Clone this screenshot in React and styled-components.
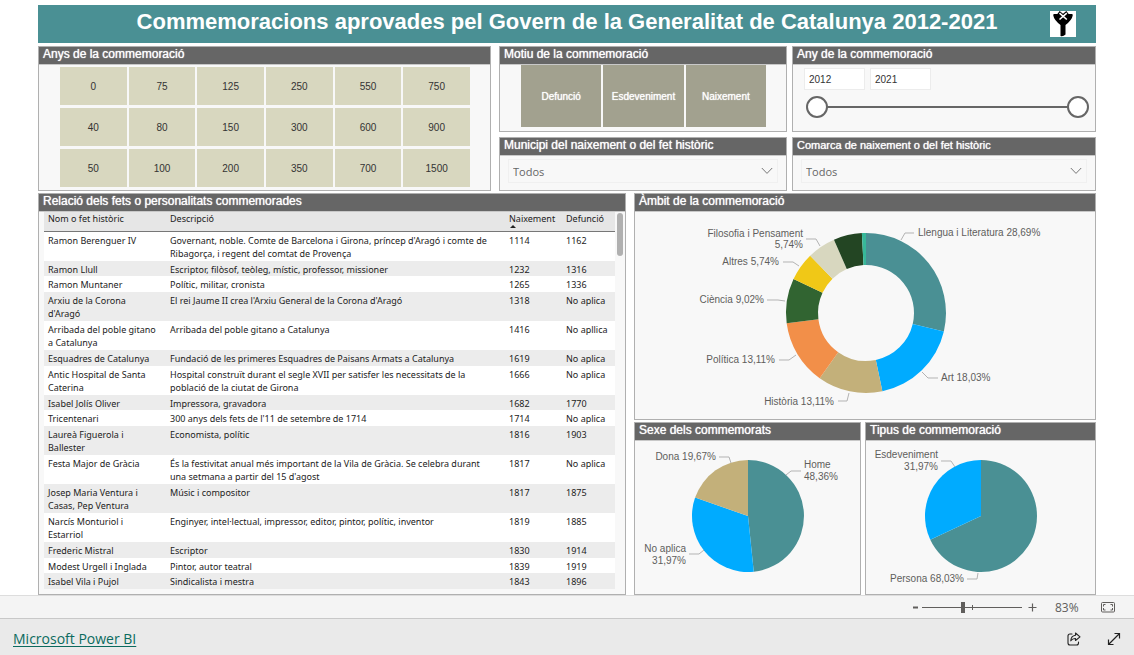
import React from "react";
import styled, { createGlobalStyle, css } from "styled-components";

const sans = `"Liberation Sans", Arial, sans-serif`;
const ui = `"Noto Sans", "Segoe UI", sans-serif`;
const uiLight = `"Open Sans", "Segoe UI", sans-serif`;

const GlobalStyle = createGlobalStyle`
  * { box-sizing: border-box; }
  body { margin: 0; background: #fff; font-family: ${sans}; color: #333; }
  button, input, select { font: inherit; color: inherit; margin: 0; }
`;

/* ---------- page ---------- */
const Report = styled.main`
  padding: 5px 38px 0;
  display: flex;
  flex-direction: column;
`;

const Banner = styled.header`
  display: grid;
  align-items: center;
  height: 38px;
  margin-bottom: 3px;
  background: #4a9094;
  color: #fff;
`;

const BannerTitle = styled.h1`
  grid-area: 1 / 1;
  margin: 0;
  padding-bottom: 5px;
  text-align: center;
  font-size: 22px;
  line-height: 26px;
  font-weight: 700;
`;

const ClearButton = styled.button`
  grid-area: 1 / 1;
  justify-self: end;
  width: 26px;
  height: 26px;
  margin-right: 20px;
  padding: 0;
  border: 0;
  background: #fff;
  svg { display: block; }
`;

const Split = styled.div`
  display: grid;
  grid-template-columns: ${(p) => p.$columns};
  column-gap: ${(p) => p.$gap}px;
`;

const Filters = styled(Split)`
  margin-bottom: 2px;
`;

const Stack = styled.div`
  display: flex;
  flex-direction: column;
  gap: ${(p) => p.$gap}px;
  min-width: 0;
`;

/* ---------- panel ---------- */
const PanelBox = styled.section`
  display: flex;
  flex-direction: column;
  min-width: 0;
  flex: ${(p) => (p.$grow ? 1 : "none")};
  border: 1px solid #b0b0b0;
  background: #f8f8f8;
`;

const PanelTitle = styled.h2`
  margin: 0;
  padding: 0 4px;
  height: 18px;
  border-bottom: 1px solid #c8c8c8;
  background: #666;
  color: #fff;
  font-size: ${(p) => (p.$small ? 11 : 12)}px;
  line-height: 14px;
  font-weight: 400;
  text-shadow: 0 0 1px #fff;
  white-space: nowrap;
`;

function Panel({ title, small, grow, children }) {
  return (
    <PanelBox $grow={grow}>
      <PanelTitle $small={small}>{title}</PanelTitle>
      {children}
    </PanelBox>
  );
}

/* ---------- tile slicers ---------- */
const YearTiles = styled.div`
  display: grid;
  grid-template-columns: repeat(6, 1fr);
  grid-auto-rows: 38px;
  gap: 3px 2px;
  padding: 2px 20px 3px 21px;
`;

const ReasonTiles = styled.div`
  display: grid;
  grid-template-columns: repeat(3, 1fr);
  grid-auto-rows: 62px;
  gap: 2px;
  padding: 0 20px 4px 21px;
`;

const Tile = styled.button`
  padding: 0;
  border: 0;
  font-size: 10px;
  background: #d8d7bf;
  color: #333;
  ${(p) =>
    p.$dark &&
    css`
      background: #a2a18f;
      color: #fff;
      text-shadow: 0 0 1px #fff;
    `}
`;

/* ---------- range slicer ---------- */
const RangeBody = styled.div`
  padding: 3px 6px 13px 11px;
`;

const YearFields = styled.div`
  display: flex;
  gap: 5px;
  margin-bottom: 6px;
`;

const YearField = styled.input`
  width: 61px;
  height: 22px;
  padding: 0 4px;
  border: 1px solid #ececec;
  background: #fff;
  font-size: 10px;
`;

const DualRange = styled.div`
  display: grid;
  align-items: center;
  margin: 0 0 0 2px;
  background: linear-gradient(#666, #666) center / calc(100% - 40px) 2px no-repeat;
`;

const RangeInput = styled.input`
  grid-area: 1 / 1;
  appearance: none;
  width: 100%;
  height: 22px;
  background: transparent;
  pointer-events: none;
  &::-webkit-slider-thumb {
    appearance: none;
    pointer-events: auto;
    width: 22px;
    height: 22px;
    border: 2px solid #666;
    border-radius: 50%;
    background: #fff;
  }
`;

/* ---------- drop-down slicer ---------- */
const SelectWrap = styled.div`
  display: grid;
  align-items: center;
  margin: 3px 8px 6px;
  svg { grid-area: 1 / 1; justify-self: end; margin-right: 5px; pointer-events: none; }
`;

const Select = styled.select`
  grid-area: 1 / 1;
  appearance: none;
  width: 100%;
  height: 24px;
  padding: 0 4px;
  border: 1px solid #f0f0f0;
  border-radius: 0;
  background: #f8f8f8;
  color: #666;
  font-family: ${uiLight};
  font-size: 11px;
`;

function Dropdown({ label }) {
  return (
    <SelectWrap>
      <Select aria-label={label}>
        <option>Todos</option>
      </Select>
      <svg width="12" height="8" viewBox="0 0 12 8" fill="none" stroke="#777">
        <path d="M.8 1 6 6.4 11.2 1" />
      </svg>
    </SelectWrap>
  );
}

/* ---------- table ---------- */
const TableBody = styled.div`
  display: flex;
  align-items: flex-start;
  padding-left: 5px;
`;

const DataTable = styled.table`
  flex: 1;
  height: 377px;
  border-collapse: collapse;
  table-layout: fixed;
  background: #fff;
  color: #222;
  font-family: ${ui};
  font-size: 9px;
  line-height: 13px;
  text-align: left;
`;

const HeadCell = styled.th`
  height: 19px;
  padding: 0 4px;
  border-bottom: 1px solid #777;
  background: #e6e6e6;
  vertical-align: top;
  font-weight: 400;
  white-space: nowrap;
  svg { display: block; margin-left: 1px; }
`;

const Row = styled.tr`
  background: ${(p) => (p.$shaded ? "#ececec" : "#fff")};
`;

const Cell = styled.td`
  padding: 2px 9px 0 4px;
  vertical-align: top;
`;

const YearCell = styled(Cell)`
  padding-right: 0;
  white-space: nowrap;
`;

const ScrollTrack = styled.div`
  width: 10px;
  padding: 1px 2px;
`;

const ScrollThumb = styled.div`
  height: 43px;
  border-radius: 3px;
  background: #b0b0b0;
`;

const rows = [
  ["Ramon Berenguer IV", "Governant, noble. Comte de Barcelona i Girona, príncep d'Aragó i comte de Ribagorça, i regent del comtat de Provença", "1114", "1162"],
  ["Ramon Llull", "Escriptor, filòsof, teòleg, místic, professor, missioner", "1232", "1316"],
  ["Ramon Muntaner", "Polític, militar, cronista", "1265", "1336"],
  ["Arxiu de la Corona d'Aragó", "El rei Jaume II crea l'Arxiu General de la Corona d'Aragó", "1318", "No aplica"],
  ["Arribada del poble gitano a Catalunya", "Arribada del poble gitano a Catalunya", "1416", "No apllica"],
  ["Esquadres de Catalunya", "Fundació de les primeres Esquadres de Paisans Armats a Catalunya", "1619", "No aplica"],
  ["Antic Hospital de Santa Caterina", "Hospital construït durant el segle XVII per satisfer les necessitats de la població de la ciutat de Girona", "1666", "No aplica"],
  ["Isabel Jolís Oliver", "Impressora, gravadora", "1682", "1770"],
  ["Tricentenari", "300 anys dels fets de l'11 de setembre de 1714", "1714", "No aplica"],
  ["Laureà Figuerola i Ballester", "Economista, polític", "1816", "1903"],
  ["Festa Major de Gràcia", "És la festivitat anual més important de la Vila de Gràcia. Se celebra durant una setmana a partir del 15 d'agost", "1817", "No aplica"],
  ["Josep Maria Ventura i Casas, Pep Ventura", "Músic i compositor", "1817", "1875"],
  ["Narcís Monturiol i Estarriol", "Enginyer, intel·lectual, impressor, editor, pintor, polític, inventor", "1819", "1885"],
  ["Frederic Mistral", "Escriptor", "1830", "1914"],
  ["Modest Urgell i Inglada", "Pintor, autor teatral", "1839", "1919"],
  ["Isabel Vila i Pujol", "Sindicalista i mestra", "1843", "1896"],
];

/* ---------- charts ---------- */
const ChartSvg = styled.svg`
  display: block;
  width: 100%;
  height: ${(p) => p.$height}px;
  text { font-family: ${sans}; font-size: 10px; fill: #605e5c; }
  polyline { fill: none; stroke: #b3b3b3; }
`;

function slicePath(cx, cy, outer, inner, from, to) {
  const point = (r, t) => {
    const a = t * 2 * Math.PI;
    return `${(cx + r * Math.sin(a)).toFixed(2)} ${(cy - r * Math.cos(a)).toFixed(2)}`;
  };
  const large = to - from > 0.5 ? 1 : 0;
  const arc = `M${point(outer, from)} A${outer} ${outer} 0 ${large} 1 ${point(outer, to)}`;
  return inner
    ? `${arc} L${point(inner, to)} A${inner} ${inner} 0 ${large} 0 ${point(inner, from)}Z`
    : `${arc} L${cx} ${cy}Z`;
}

function Chart({ label, width, height, cx, cy, outer, inner, slices, notes }) {
  const total = slices.reduce((sum, s) => sum + s[0], 0);
  let at = 0;
  return (
    <ChartSvg $height={height} viewBox={`0 0 ${width} ${height}`} role="img" aria-label={label}>
      {slices.map(([value, color], i) => {
        const from = at / total;
        at += value;
        return <path key={i} d={slicePath(cx, cy, outer, inner, from, at / total)} fill={color} />;
      })}
      {notes.map(({ lines, x, y, end, step = 12, leader }) => (
        <g key={lines[0]}>
          <polyline points={leader} />
          {lines.map((line, i) => (
            <text key={line} x={x} y={y + i * step} textAnchor={end ? "end" : "start"}>
              {line}
            </text>
          ))}
        </g>
      ))}
    </ChartSvg>
  );
}

const fieldSlices = [
  [28.69, "#4a9094"], [18.03, "#00abff"], [13.11, "#c3b07a"], [13.11, "#f28f49"],
  [9.02, "#316431"], [5.74, "#f0c817"], [5.74, "#d8d7bf"], [5.74, "#234523"], [0.82, "#37b899"],
];
const fieldNotes = [
  { lines: ["Llengua i Literatura 28,69%"], x: 283, y: 24, leader: "279,21 270,21 266,28" },
  { lines: ["Art 18,03%"], x: 306, y: 169, leader: "303,166 293,166 287,160" },
  { lines: ["Història 13,11%"], x: 199, y: 193, end: true, leader: "203,189 212,189 214,181" },
  { lines: ["Política 13,11%"], x: 140, y: 151, end: true, leader: "144,148 154,148 161,143" },
  { lines: ["Ciència 9,02%"], x: 129, y: 91, end: true, leader: "132,88 143,88 150,89" },
  { lines: ["Altres 5,74%"], x: 144, y: 53, end: true, leader: "148,50 158,50 164,54" },
  { lines: ["Filosofia i Pensament", "5,74%"], x: 168, y: 25, step: 11, end: true, leader: "171,27 181,27 185,34" },
];
const sexSlices = [[48.36, "#4a9094"], [31.97, "#00abff"], [19.67, "#c3b07a"]];
const sexNotes = [
  { lines: ["Home", "48,36%"], x: 169, y: 27, leader: "166,30 156,30 151,34" },
  { lines: ["No aplica", "31,97%"], x: 51, y: 111, end: true, leader: "54,113 64,113 69,109" },
  { lines: ["Dona 19,67%"], x: 81, y: 19, end: true, leader: "84,16 94,16 96,22" },
];
const kindSlices = [[68.03, "#4a9094"], [31.97, "#00abff"]];
const kindNotes = [
  { lines: ["Esdeveniment", "31,97%"], x: 72, y: 17, end: true, leader: "75,20 85,20 89,26" },
  { lines: ["Persona 68,03%"], x: 98, y: 141, end: true, leader: "101,138 111,138 112,132" },
];

/* ---------- bottom bars ---------- */
const ZoomBar = styled.div`
  display: flex;
  align-items: center;
  justify-content: flex-end;
  height: 24px;
  padding-right: 19px;
  border-top: 1px solid #ddd;
  border-bottom: 1px solid #c8c8c8;
  background: #f4f4f4;
  color: #605e5c;
  font-family: ${uiLight};
  font-size: 12px;
`;

const IconButton = styled.button`
  display: flex;
  padding: 0;
  border: 0;
  background: none;
`;

const ZoomRange = styled.input`
  appearance: none;
  width: 100px;
  height: 12px;
  margin: 0 6px 0 4px;
  background:
    linear-gradient(#605e5c, #605e5c) center / 100% 1px no-repeat,
    linear-gradient(#605e5c, #605e5c) center / 1px 5px no-repeat;
  &::-webkit-slider-thumb {
    appearance: none;
    width: 4px;
    height: 11px;
    background: #605e5c;
  }
`;

const ZoomValue = styled.output`
  width: 26px;
  margin: 0 20px 0 18px;
`;

const BrandBar = styled.footer`
  display: flex;
  align-items: center;
  gap: 26px;
  height: 36px;
  padding: 4px 13px 0;
  background: #eaeaea;
`;

const BrandLink = styled.a`
  margin-right: auto;
  color: #0b6a5e;
  font-family: ${uiLight};
  font-size: 14px;
  line-height: 18px;
  text-underline-offset: 2px;
`;

const years = [0, 75, 125, 250, 550, 750, 40, 80, 150, 300, 600, 900, 50, 100, 200, 350, 700, 1500];

export default function App() {
  return (
    <>
      <GlobalStyle />
      <Report>
        <Banner>
          <BannerTitle>Commemoracions aprovades pel Govern de la Generalitat de Catalunya 2012-2021</BannerTitle>
          <ClearButton aria-label="Esborra els filtres">
            <svg width="26" height="26" viewBox="0 0 26 26">
              <path d="M4 3Q3 3 3.300 4.500Q4 9 10.500 14V25Q13 26 15.500 23.500V14Q22 9 22.700 4.500Q23 3 22 3Z" fill="#000" />
              <path d="M8.500 1.500 17.500 9M17.500 1.500 8.500 9" stroke="#000" strokeWidth="3.600" />
              <path d="M9.500 2.200 16.800 8.500M16.800 2.200 9.500 8.500" stroke="#fff" strokeWidth="1.600" />
            </svg>
          </ClearButton>
        </Banner>

        <Filters $columns="453fr 597fr" $gap={8}>
          <Panel title="Anys de la commemoració">
            <YearTiles>
              {years.map((y) => (
                <Tile key={y}>{y}</Tile>
              ))}
            </YearTiles>
          </Panel>
          <Split $columns="288fr 304fr" $gap={5}>
            <Stack $gap={5}>
              <Panel title="Motiu de la commemoració">
                <ReasonTiles>
                  <Tile $dark>Defunció</Tile>
                  <Tile $dark>Esdeveniment</Tile>
                  <Tile $dark>Naixement</Tile>
                </ReasonTiles>
              </Panel>
              <Panel title="Municipi del naixement o del fet històric" grow>
                <Dropdown label="Municipi del naixement o del fet històric" />
              </Panel>
            </Stack>
            <Stack $gap={5}>
              <Panel title="Any de la commemoració">
                <RangeBody>
                  <YearFields>
                    <YearField aria-label="Any inicial" defaultValue="2012" />
                    <YearField aria-label="Any final" defaultValue="2021" />
                  </YearFields>
                  <DualRange>
                    <RangeInput type="range" aria-label="Any inicial" min="2012" max="2021" defaultValue="2012" />
                    <RangeInput type="range" aria-label="Any final" min="2012" max="2021" defaultValue="2021" />
                  </DualRange>
                </RangeBody>
              </Panel>
              <Panel title="Comarca de naixement o del fet històric" small grow>
                <Dropdown label="Comarca de naixement o del fet històric" />
              </Panel>
            </Stack>
          </Split>
        </Filters>

        <Split $columns="588fr 462fr" $gap={8}>
          <Panel title="Relació dels fets o personalitats commemorades">
            <TableBody>
              <DataTable>
                <colgroup>
                  <col width="122" />
                  <col />
                  <col width="57" />
                  <col width="53" />
                </colgroup>
                <thead>
                  <tr>
                    <HeadCell>Nom o fet històric</HeadCell>
                    <HeadCell>Descripció</HeadCell>
                    <HeadCell aria-sort="ascending">
                      Naixement
                      <svg width="6" height="3" viewBox="0 0 6 3">
                        <path d="M0 3 3 0 6 3Z" fill="#222" />
                      </svg>
                    </HeadCell>
                    <HeadCell>Defunció</HeadCell>
                  </tr>
                </thead>
                <tbody>
                  {rows.map(([name, description, born, died], i) => (
                    <Row key={name} $shaded={i % 2 === 1}>
                      <Cell>{name}</Cell>
                      <Cell>{description}</Cell>
                      <YearCell>{born}</YearCell>
                      <YearCell>{died}</YearCell>
                    </Row>
                  ))}
                </tbody>
              </DataTable>
              <ScrollTrack>
                <ScrollThumb />
              </ScrollTrack>
            </TableBody>
          </Panel>
          <Stack $gap={2}>
            <Panel title="Àmbit de la commemoració">
              <Chart label="Àmbit de la commemoració" width={460} height={207} cx={231} cy={101} outer={80} inner={48} slices={fieldSlices} notes={fieldNotes} />
            </Panel>
            <Split $columns="227fr 231fr" $gap={4}>
              <Panel title="Sexe dels commemorats">
                <Chart label="Sexe dels commemorats" width={225} height={153} cx={113} cy={75} outer={56} slices={sexSlices} notes={sexNotes} />
              </Panel>
              <Panel title="Tipus de commemoració">
                <Chart label="Tipus de commemoració" width={229} height={153} cx={115} cy={75} outer={56} slices={kindSlices} notes={kindNotes} />
              </Panel>
            </Split>
          </Stack>
        </Split>
      </Report>

      <ZoomBar>
        <IconButton aria-label="Allunya">
          <svg width="5" height="11" viewBox="0 0 5 11">
            <path d="M0 5.500H5" stroke="#605e5c" strokeWidth="2" />
          </svg>
        </IconButton>
        <ZoomRange type="range" aria-label="Zoom" min="0" max="100" defaultValue="41" />
        <IconButton aria-label="Apropa">
          <svg width="9" height="9" viewBox="0 0 9 9">
            <path d="M0.500 4.500H8.500M4.500 0.500V8.500" stroke="#605e5c" strokeWidth="1.200" />
          </svg>
        </IconButton>
        <ZoomValue>83%</ZoomValue>
        <IconButton aria-label="Ajusta a la pàgina">
          <svg width="14" height="11" viewBox="0 0 14 11" fill="none" stroke="#605e5c">
            <rect x="0.500" y="0.500" width="13" height="9.500" rx="1" />
            <path d="M2.500 4.500V2.500H4.500M9.500 2.500H11.500V4.500M11.500 6V8H9.500M4.500 8H2.500V6" />
          </svg>
        </IconButton>
      </ZoomBar>

      <BrandBar>
        <BrandLink href="#powerbi">Microsoft Power BI</BrandLink>
        <IconButton aria-label="Comparteix">
          <svg width="14" height="14" viewBox="0 0 14 14" fill="none" stroke="#222" strokeWidth="1.100" strokeLinejoin="round" strokeLinecap="round">
            <path d="M5 2H3Q1 2 1 4V11Q1 13 3 13H9.500Q11.500 13 11.500 11V10" />
            <path d="M8.500 1 13 4.800 8.500 8.500V6.500Q5.500 6.300 3.800 8.800Q4 3.800 8.500 3.200Z" />
          </svg>
        </IconButton>
        <IconButton aria-label="Pantalla completa">
          <svg width="14" height="14" viewBox="0 0 14 14" fill="none" stroke="#222" strokeWidth="1.200">
            <path d="M1.500 12.500 12.500 1.500M7.500 1.500H12.500V6.500M1.500 7.500V12.500H6.500" />
          </svg>
        </IconButton>
      </BrandBar>
    </>
  );
}
